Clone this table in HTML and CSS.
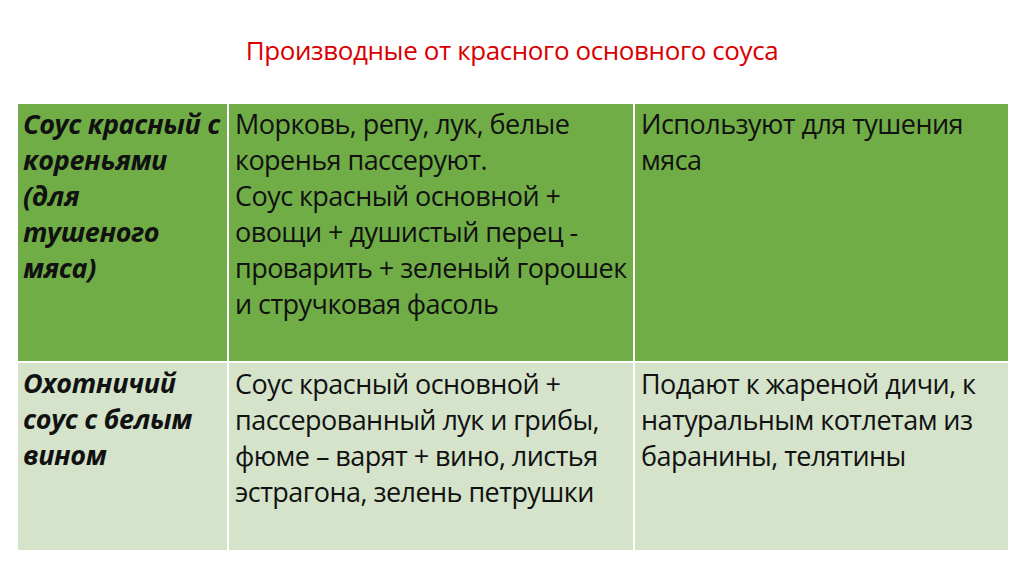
FILE: index.html
```html
<!DOCTYPE html>
<html lang="ru">
<head>
<meta charset="utf-8">
<link rel="stylesheet" href="styles.css">
</head>
<body>
<div class="slide">
  <h1 class="title">Производные от красного основного соуса</h1>
  <table class="sauce">
    <colgroup>
      <col class="c1"><col class="c2"><col class="c3">
    </colgroup>
    <tr class="row-dark">
      <td class="name">Соус красный с кореньями (для тушеного мяса)</td>
      <td>Морковь, репу, лук, белые коренья пассеруют.<br>Соус красный основной + овощи + душистый перец - проварить + зеленый горошек и стручковая фасоль</td>
      <td>Используют для тушения мяса</td>
    </tr>
    <tr class="row-light">
      <td class="name">Охотничий соус с белым вином</td>
      <td>Соус красный основной + пассерованный лук и грибы, фюме – варят + вино, листья эстрагона, зелень петрушки</td>
      <td>Подают к жареной дичи, к натуральным котлетам из баранины, телятины</td>
    </tr>
  </table>
</div>
</body>
</html>
```
FILE: styles.css
```css
html, body {
  margin: 0;
  padding: 0;
  background: #ffffff;
}
.slide {
  width: 1024px;
  height: 574px;
  box-sizing: border-box;
  padding: 34px 16px 0 16px;
  font-family: "Open Sans", "Noto Sans", sans-serif;
}
.title {
  margin: 0 0 36px 0;
  font-weight: 400;
  font-size: 26px;
  line-height: 32px;
  color: #d80000;
  text-align: center;
  letter-spacing: -0.4px;
}
.sauce {
  width: 992px;
  border-collapse: collapse;
  table-layout: fixed;
}
.c1 { width: 211px; }
.c2 { width: 406px; }
.c3 { width: 375px; }
.sauce td {
  border: 2px solid #ffffff;
  vertical-align: top;
  padding: 2px 2px 0 6px;
  font-size: 27px;
  line-height: 36px;
  color: #111111;
  letter-spacing: -0.55px;
}
.sauce td.name {
  font-weight: 700;
  font-style: italic;
  letter-spacing: -0.35px;
  padding: 2px 6px 0 5px;
}
.row-dark td {
  background: #70ad47;
  height: 255px;
}
.row-light td {
  background: #d5e3cb;
  height: 184px;
}
.row-light td {
  padding-top: 3px;
}
```
